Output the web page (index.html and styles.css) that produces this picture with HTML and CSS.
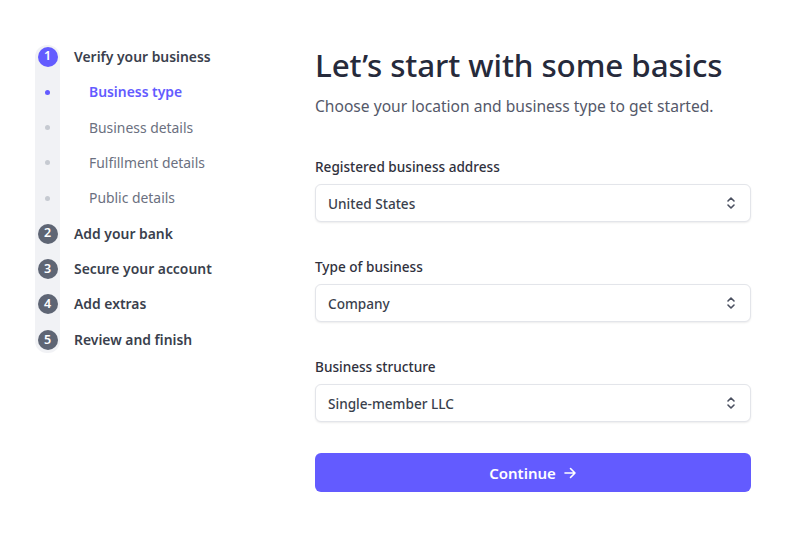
FILE: index.html
```html
<!DOCTYPE html>
<html lang="en">
<head>
<meta charset="utf-8">
<title>Let's start with some basics</title>
<link rel="stylesheet" href="styles.css">
</head>
<body>
<div class="page">
  <nav class="sidebar">
    <ol class="steps">
      <li class="step main current"><span class="mark"><span class="num">1</span></span><span class="label">Verify your business</span></li>
      <li class="step sub active"><span class="mark"><span class="dot"></span></span><span class="label">Business type</span></li>
      <li class="step sub"><span class="mark"><span class="dot"></span></span><span class="label">Business details</span></li>
      <li class="step sub"><span class="mark"><span class="dot"></span></span><span class="label">Fulfillment details</span></li>
      <li class="step sub"><span class="mark"><span class="dot"></span></span><span class="label">Public details</span></li>
      <li class="step main"><span class="mark"><span class="num">2</span></span><span class="label">Add your bank</span></li>
      <li class="step main"><span class="mark"><span class="num">3</span></span><span class="label">Secure your account</span></li>
      <li class="step main"><span class="mark"><span class="num">4</span></span><span class="label">Add extras</span></li>
      <li class="step main"><span class="mark"><span class="num">5</span></span><span class="label">Review and finish</span></li>
    </ol>
  </nav>
  <main class="content">
    <h1 class="title">Let’s start with some basics</h1>
    <p class="subtitle">Choose your location and business type to get started.</p>
    <div class="field">
      <label class="field-label">Registered business address</label>
      <div class="select"><span class="select-value">United States</span>
        <svg class="chev" width="10" height="14" viewBox="0 0 10 14"><path d="M2 5 L5 2 L8 5 M2 9 L5 12 L8 9" fill="none" stroke="#4b5060" stroke-width="1.6" stroke-linecap="round" stroke-linejoin="round"/></svg>
      </div>
    </div>
    <div class="field">
      <label class="field-label">Type of business</label>
      <div class="select"><span class="select-value">Company</span>
        <svg class="chev" width="10" height="14" viewBox="0 0 10 14"><path d="M2 5 L5 2 L8 5 M2 9 L5 12 L8 9" fill="none" stroke="#4b5060" stroke-width="1.6" stroke-linecap="round" stroke-linejoin="round"/></svg>
      </div>
    </div>
    <div class="field">
      <label class="field-label">Business structure</label>
      <div class="select"><span class="select-value">Single-member LLC</span>
        <svg class="chev" width="10" height="14" viewBox="0 0 10 14"><path d="M2 5 L5 2 L8 5 M2 9 L5 12 L8 9" fill="none" stroke="#4b5060" stroke-width="1.6" stroke-linecap="round" stroke-linejoin="round"/></svg>
      </div>
    </div>
    <button class="continue" type="button">Continue
      <svg class="arrow" width="14" height="14" viewBox="0 0 14 14"><path d="M2 7 H12 M7.5 2.5 L12 7 L7.5 11.5" fill="none" stroke="#ffffff" stroke-width="1.6" stroke-linecap="round" stroke-linejoin="round"/></svg>
    </button>
  </main>
</div>
</body>
</html>
```
FILE: styles.css
```css
* { box-sizing: border-box; }
html, body { margin: 0; padding: 0; background: #ffffff; }
body {
  font-family: "Noto Sans", "Open Sans", "DejaVu Sans", sans-serif;
  color: #30313d;
}
.page {
  display: flex;
  padding: 39px 0 0 35px;
}
.sidebar { width: 280px; flex: none; }
.steps {
  list-style: none;
  margin: 0;
  padding: 0;
  position: relative;
}
.steps::before {
  content: "";
  position: absolute;
  left: 0;
  top: 6px;
  bottom: 5px;
  width: 25px;
  border-radius: 12px;
  background: #f1f2f5;
}
.step {
  position: relative;
  display: flex;
  align-items: center;
  height: 35.4px;
}
.mark {
  width: 25px;
  flex: none;
  display: flex;
  justify-content: center;
  align-items: center;
}
.num {
  width: 20px;
  height: 20px;
  border-radius: 50%;
  background: #5e6574;
  color: #ffffff;
  font-size: 12.5px;
  font-weight: 600;
  display: flex;
  align-items: center;
  justify-content: center;
  line-height: 1;
}
.current .num { background: #635bff; }
.dot {
  width: 5px;
  height: 5px;
  border-radius: 50%;
  background: #c6cad1;
}
.active .dot { background: #635bff; }
.label { font-size: 13.9px; line-height: 1; }
.main .label {
  margin-left: 14px;
  font-weight: 600;
  color: #3a3f4d;
}
.sub .label {
  margin-left: 29px;
  color: #6b7080;
}
.active .label { color: #635bff; font-weight: 600; }

.content {
  width: 436px;
  display: flex;
  flex-direction: column;
}
.title {
  margin: 7px 0 0 0;
  font-size: 31.4px;
  font-weight: 500;
  color: #262a3b;
  line-height: 38px;
  letter-spacing: -0.1px;
}
.subtitle {
  margin: 12px 0 0 0;
  font-size: 15.6px;
  line-height: 20px;
  color: #545869;
}
.field { display: flex; flex-direction: column; margin-top: 41px; }
.field + .field { margin-top: 35px; }
.field-label {
  font-size: 13.6px;
  font-weight: 500;
  line-height: 20px;
  color: #30313d;
  margin-bottom: 7px;
}
.select {
  height: 38px;
  border: 1px solid #e3e5ea;
  border-radius: 6px;
  box-shadow: 0 1px 2px rgba(0,0,0,0.08);
  display: flex;
  align-items: center;
  justify-content: space-between;
  padding: 0 14px 0 12px;
  background: #ffffff;
}
.select-value {
  font-size: 13.6px;
  font-weight: 500;
  color: #3a3f4d;
}
.chev { display: block; }
.continue {
  margin-top: 31px;
  height: 39px;
  border: none;
  border-radius: 6px;
  background: #635bff;
  color: #ffffff;
  font-family: inherit;
  font-size: 15px;
  font-weight: 600;
  display: flex;
  align-items: center;
  justify-content: center;
  gap: 7px;
  padding: 0;
}
.arrow { display: block; }
```
